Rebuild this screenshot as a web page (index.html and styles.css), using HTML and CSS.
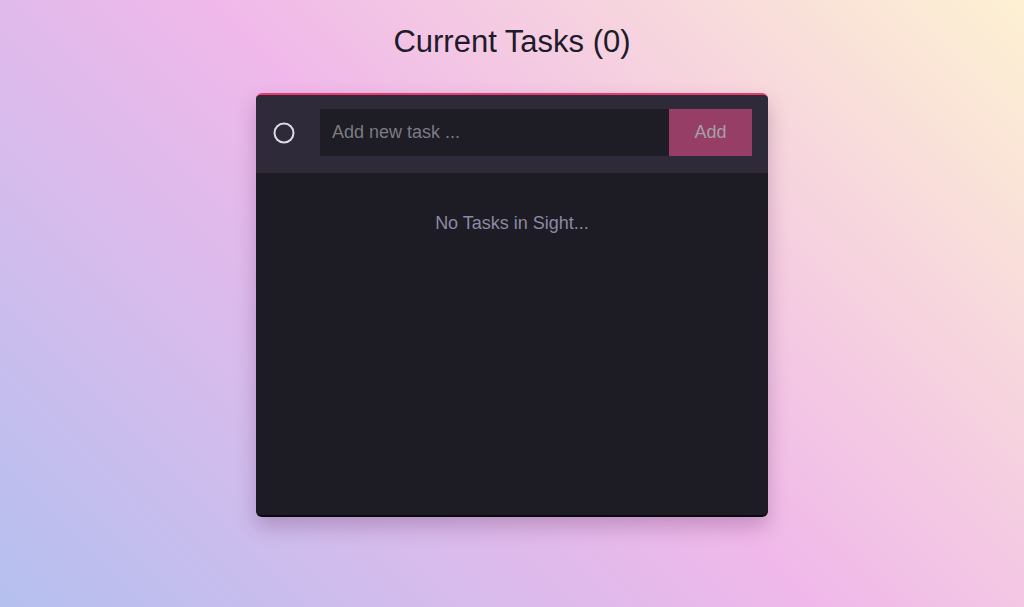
FILE: index.html
```html
<!DOCTYPE html>
<html lang="en">
<head>
<meta charset="utf-8">
<title>Current Tasks</title>
<link rel="stylesheet" href="styles.css">
</head>
<body>
<main class="app">
  <h1 class="title">Current Tasks (0)</h1>
  <section class="card">
    <header class="card-head">
      <span class="toggle" aria-hidden="true">
        <svg width="24" height="24" viewBox="0 0 24 24"><circle cx="12" cy="12" r="9.5" fill="none" stroke="#dcdce2" stroke-width="2"/></svg>
      </span>
      <form class="add-form">
        <input class="task-input" type="text" placeholder="Add new task ...">
        <button class="add-btn" type="button">Add</button>
      </form>
    </header>
    <div class="card-body">
      <p class="empty">No Tasks in Sight...</p>
    </div>
  </section>
</main>
</body>
</html>
```
FILE: styles.css
```css
* { box-sizing: border-box; }
html, body { margin: 0; height: 100%; }
body {
  font-family: "Liberation Sans", Arial, sans-serif;
  background: linear-gradient(45deg, #b4c0ef 0%, #f0b8ea 50%, #fdf1d2 100%);
  min-height: 607px;
}
.app {
  display: flex;
  flex-direction: column;
  align-items: center;
  padding-top: 24px;
}
.title {
  margin: 0;
  font-weight: 400;
  font-size: 31px;
  line-height: 36px;
  color: #1e1b2a;
}
.card {
  margin-top: 33px;
  width: 512px;
  height: 424px;
  border-radius: 6px;
  border-top: 2px solid #e63a70;
  border-bottom: 2px solid #0a090d;
  background: #1d1b24;
  overflow: hidden;
  box-shadow: 0 10px 20px rgba(90, 40, 90, 0.28);
  display: flex;
  flex-direction: column;
}
.card-head {
  height: 78px;
  background: #2f2a3a;
  display: flex;
  align-items: flex-start;
  padding: 14px 16px 0 16px;
}
.toggle {
  width: 24px;
  height: 24px;
  display: flex;
  margin-top: 12px;
}
.add-form {
  display: flex;
  margin-left: 24px;
  flex: 1;
  height: 47px;
}
.task-input {
  flex: 1;
  min-width: 0;
  border: none;
  outline: none;
  background: #1e1c25;
  color: #ccc;
  font-family: "Liberation Sans", Arial, sans-serif;
  font-size: 18px;
  padding: 0 12px;
}
.task-input::placeholder { color: #7b7c82; }
.add-btn {
  width: 83px;
  border: none;
  background: #973e66;
  color: #a3a1a8;
  font-family: "Liberation Sans", Arial, sans-serif;
  font-size: 18px;
  padding: 0;
}
.card-body {
  flex: 1;
  display: flex;
  justify-content: center;
}
.empty {
  margin: 40px 0 0;
  font-size: 18px;
  line-height: 20px;
  color: #8a8aa0;
}
```
